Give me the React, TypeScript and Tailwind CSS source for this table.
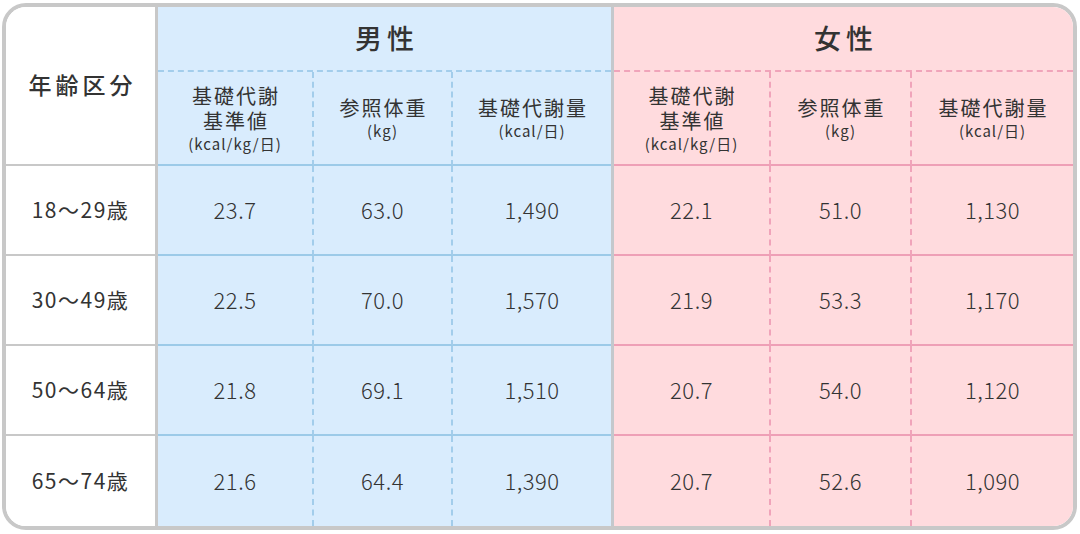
import React from "react";

const ages = ["18～29歳", "30～49歳", "50～64歳", "65～74歳"];
const male = [
  ["23.7", "63.0", "1,490"],
  ["22.5", "70.0", "1,570"],
  ["21.8", "69.1", "1,510"],
  ["21.6", "64.4", "1,390"],
];
const female = [
  ["22.1", "51.0", "1,130"],
  ["21.9", "53.3", "1,170"],
  ["20.7", "54.0", "1,120"],
  ["20.7", "52.6", "1,090"],
];

const font = { fontFamily: '"Noto Sans CJK JP", "Noto Sans", sans-serif' };

function Sub({ lines, unit }: { lines: string[]; unit: string }) {
  return (
    <div className="flex flex-col items-center justify-center text-[#333] text-center">
      <div className="text-[20px] leading-[25px] tracking-[2px] pl-[2px]">
        {lines.map((l, i) => (
          <React.Fragment key={l}>
            {i > 0 && <br />}
            {l}
          </React.Fragment>
        ))}
      </div>
      <div className="text-[15px] leading-[21px] tracking-[1px]">{unit}</div>
    </div>
  );
}

function Section({
  title,
  data,
  widths,
  bg,
  dash,
  solid,
}: {
  title: string;
  data: string[][];
  widths: string;
  bg: string;
  dash: string;
  solid: string;
}) {
  return (
    <div className={`flex flex-col ${bg}`}>
      <div className={`h-[65px] flex items-center justify-center border-b-2 border-dashed ${dash}`}>
        <span className="text-[27px] font-medium tracking-[5px] text-[#333] pl-[5px]">{title}</span>
      </div>
      <div className={`grid ${widths}`}>
        {[0, 1, 2].map((c) => (
          <div
            key={c}
            className={`h-[94px] flex items-center justify-center border-b-2 ${solid} ${
              c < 2 ? `border-r-2 ${dash}` : ""
            }`}
            style={c < 2 ? { borderRightStyle: "dashed", borderBottomStyle: "solid" } : undefined}
          >
            {c === 0 && <Sub lines={["基礎代謝", "基準値"]} unit="(kcal/kg/日)" />}
            {c === 1 && <Sub lines={["参照体重"]} unit="(kg)" />}
            {c === 2 && <Sub lines={["基礎代謝量"]} unit="(kcal/日)" />}
          </div>
        ))}
        {data.map((row, r) =>
          row.map((v, c) => (
            <div
              key={`${r}-${c}`}
              className={`${r < 3 ? "h-[90px] border-b-2" : "h-[90px]"} ${solid} ${
                c < 2 ? `border-r-2 ${dash}` : ""
              } flex items-center justify-center text-[22px] font-light text-[#333] tracking-[0.5px] pb-[1px]`}
              style={c < 2 ? { borderRightStyle: "dashed", borderBottomStyle: "solid" } : undefined}
            >
              {v}
            </div>
          ))
        )}
      </div>
    </div>
  );
}

export default function App() {
  return (
    <div className="w-[1080px] h-[534px] bg-white pt-[3px] pl-[2px]" style={font}>
      <div className="w-[1075px] h-[527px] border-4 border-[#c8c8c8] rounded-[24px] overflow-hidden flex">
        <div className="w-[152px] bg-white flex flex-col border-r-[3px] border-[#c8c8c8] shrink-0">
          <div className="h-[159px] flex items-center justify-center border-b-2 border-[#c8c8c8]">
            <span className="text-[23px] font-medium tracking-[4px] text-[#333] pl-[4px] pb-[2px]">年齢区分</span>
          </div>
          {ages.map((a, i) => (
            <div
              key={a}
              className={`h-[90px] flex items-center justify-center text-[21px] text-[#333] tracking-[1.5px] ${
                i < 3 ? "border-b-2 border-[#c8c8c8]" : ""
              }`}
            >
              {a}
            </div>
          ))}
        </div>
        <div className="w-[453px] shrink-0 border-r-[3px] border-[#c4c8cc] box-content">
          <Section
            title="男性"
            data={male}
            widths="grid-cols-[156px_139px_158px]"
            bg="bg-[#d9ecfd]"
            dash="border-[#a3cdeb]"
            solid="border-b-[#9ccae8]"
          />
        </div>
        <div className="w-[459px] shrink-0">
          <Section
            title="女性"
            data={female}
            widths="grid-cols-[157px_141px_161px]"
            bg="bg-[#ffdbde]"
            dash="border-[#f0a4ba]"
            solid="border-b-[#ee9fb6]"
          />
        </div>
      </div>
    </div>
  );
}
